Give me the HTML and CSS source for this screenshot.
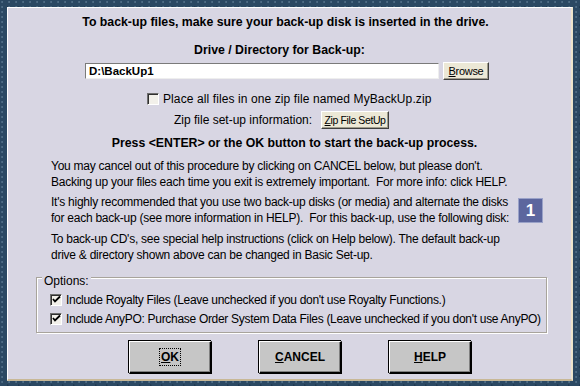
FILE: index.html
```html
<!DOCTYPE html>
<html>
<head>
<meta charset="utf-8">
<link rel="stylesheet" href="styles.css">
</head>
<body>
<div class="panel">
  <div class="title">To back-up files, make sure your back-up disk is inserted in the drive.</div>
  <div class="label">Drive / Directory for Back-up:</div>
  <div class="path-row">
    <div class="path-input">D:\BackUp1</div>
    <button class="small-btn browse"><u>B</u>rowse</button>
  </div>
  <div class="zip-check">
    <span class="cb"></span>
    <span>Place all files in one zip file named MyBackUp.zip</span>
  </div>
  <div class="zip-row">
    <span>Zip file set-up information:</span>
    <button class="small-btn zipbtn"><u>Z</u>ip File SetUp</button>
  </div>
  <div class="press">Press &lt;ENTER&gt; or the OK button to start the back-up process.</div>
  <p class="para p1">You may cancel out of this procedure by clicking on CANCEL below, but please don't.<br>Backing up your files each time you exit is extremely important.&nbsp; For more info: click HELP.</p>
  <div class="para-row">
    <p class="para p2">It's highly recommended that you use two back-up disks (or media) and alternate the disks<br>for each back-up (see more information in HELP).&nbsp; For this back-up, use the following disk:</p>
    <div class="badge">1</div>
  </div>
  <p class="para p3">To back-up CD's, see special help instructions (click on Help below). The default back-up<br>drive &amp; directory shown above can be changed in Basic Set-up.</p>
  <div class="options">
    <span class="legend">Options:</span>
    <div class="opt"><span class="cb checked"><svg width="9" height="9" viewBox="0 0 9 9"><path d="M1 4 L3 6.5 L8 1.5" stroke="#000" stroke-width="1.8" fill="none"/></svg></span><span>Include Royalty Files (Leave unchecked if you don't use Royalty Functions.)</span></div>
    <div class="opt"><span class="cb checked"><svg width="9" height="9" viewBox="0 0 9 9"><path d="M1 4 L3 6.5 L8 1.5" stroke="#000" stroke-width="1.8" fill="none"/></svg></span><span>Include AnyPO: Purchase Order System Data Files (Leave unchecked if you don't use AnyPO)</span></div>
  </div>
  <div class="buttons">
    <button class="big-btn"><span class="focus"><u>O</u>K</span></button>
    <button class="big-btn"><u>C</u>ANCEL</button>
    <button class="big-btn"><u>H</u>ELP</button>
  </div>
</div>
</body>
</html>
```
FILE: styles.css
```css
html, body {
  margin: 0;
  padding: 0;
}
body {
  width: 580px;
  height: 386px;
  overflow: hidden;
  background-color: #2b4963;
  background-image:
    radial-gradient(circle at 30% 40%, rgba(150,180,200,0.35) 0.6px, transparent 1.2px),
    radial-gradient(circle at 70% 80%, rgba(20,40,60,0.5) 0.6px, transparent 1.2px);
  background-size: 7px 5px, 11px 9px;
  font-family: "Liberation Sans", Arial, sans-serif;
  font-size: 12px;
  color: #000;
}
.panel {
  box-sizing: border-box;
  margin: 7px 0 0 7px;
  width: 566px;
  height: 374px;
  background: #d8d6e3;
  border-top: 1px solid #ffffff;
  border-left: 1px solid #ffffff;
  border-right: 2px solid #ece4cc;
  border-bottom: 2px solid #c8b896;
  display: flex;
  flex-direction: column;
}
.title, .label, .press {
  font-weight: bold;
  font-size: 12.3px;
  line-height: 14px;
  text-align: center;
  white-space: nowrap;
}
.title { margin-top: 7px; padding-right: 8px; }
.label { margin-top: 14px; padding-right: 20px; }
.path-row {
  display: flex;
  align-items: center;
  margin-top: 5px;
  padding-left: 77px;
  height: 18px;
}
.path-input {
  box-sizing: border-box;
  width: 354px;
  height: 16px;
  background: #fff;
  border-top: 1px solid #7a7a7a;
  border-left: 1px solid #7a7a7a;
  border-right: 1px solid #eeeeee;
  border-bottom: 1px solid #eeeeee;
  font-weight: bold;
  font-size: 11.5px;
  line-height: 14px;
  padding-left: 3px;
}
.small-btn {
  box-sizing: border-box;
  font-family: "Liberation Sans", Arial, sans-serif;
  font-size: 11px;
  background: #ece8d6;
  color: #000;
  border-top: 1px solid #ffffff;
  border-left: 1px solid #ffffff;
  border-right: 1px solid #404040;
  border-bottom: 1px solid #404040;
  box-shadow: inset -1px -1px 0 #a09c8c;
  padding: 0;
  height: 18px;
  line-height: 15px;
  letter-spacing: -0.3px;
  white-space: nowrap;
}
.browse { width: 46px; margin-left: 4px; }
.zip-check {
  display: flex;
  align-items: center;
  margin-top: 12px;
  padding-left: 139px;
  line-height: 14px;
  gap: 4px;
  letter-spacing: 0.1px;
}
.cb {
  box-sizing: border-box;
  display: inline-flex;
  align-items: center;
  justify-content: center;
  width: 12px;
  height: 12px;
  background: #f2f0ea;
  border-top: 1px solid #6e6e6e;
  border-left: 1px solid #6e6e6e;
  border-right: 1px solid #ffffff;
  border-bottom: 1px solid #ffffff;
  box-shadow: inset 1px 1px 0 #303030;
  flex: none;
}
.zip-row {
  display: flex;
  align-items: center;
  margin-top: 5px;
  padding-left: 166px;
  height: 18px;
  white-space: nowrap;
}
.zipbtn { width: 68px; margin-left: 9px; font-size: 10.5px; letter-spacing: -0.4px; }
.press { margin-top: 7px; padding-left: 10px; }
.para {
  margin: 0;
  line-height: 16px;
  padding-left: 43px;
  letter-spacing: -0.25px;
  white-space: nowrap;
}
.p1 { margin-top: 8px; }
.para-row {
  display: flex;
  align-items: center;
  margin-top: 4px;
}
.p2 { width: 470px; flex: none; }
.badge {
  box-sizing: border-box;
  width: 25px;
  height: 25px;
  margin-left: -3px;
  background: #5c669e;
  border: 1px solid #9aa2c8;
  color: #fff;
  font-weight: bold;
  font-size: 17px;
  line-height: 23px;
  text-align: center;
}
.p3 { margin-top: 5px; }
.options {
  box-sizing: border-box;
  margin: 14px 0 0 28px;
  width: 511px;
  height: 56px;
  padding: 0 0 0 13px;
  border: 1px solid #a8a49c;
  box-shadow: 1px 1px 0 #ffffff, inset 1px 1px 0 #ffffff;
}
.legend {
  display: block;
  width: max-content;
  background: #d8d6e3;
  padding: 0 2px;
  margin: -3px 0 0 -8px;
  line-height: 12px;
}
.opt {
  display: flex;
  align-items: center;
  gap: 4px;
  height: 19px;
  white-space: nowrap;
  letter-spacing: -0.3px;
}
.legend + .opt { margin-top: 3px; }
.buttons {
  display: flex;
  gap: 47px;
  padding-left: 121px;
  margin-top: 8px;
}
.big-btn {
  box-sizing: border-box;
  width: 83px;
  height: 33px;
  background: #c6c6c6;
  color: #000;
  font-family: "Liberation Sans", Arial, sans-serif;
  font-weight: bold;
  font-size: 12px;
  border-top: 1px solid #ffffff;
  border-left: 1px solid #ffffff;
  border-right: 2px solid #000;
  border-bottom: 2px solid #000;
  box-shadow: -1px -1px 0 #000, inset -1px -1px 0 #808080;
  padding: 0;
}
.focus {
  outline: 1px dotted #000;
  outline-offset: 1px;
}
```
